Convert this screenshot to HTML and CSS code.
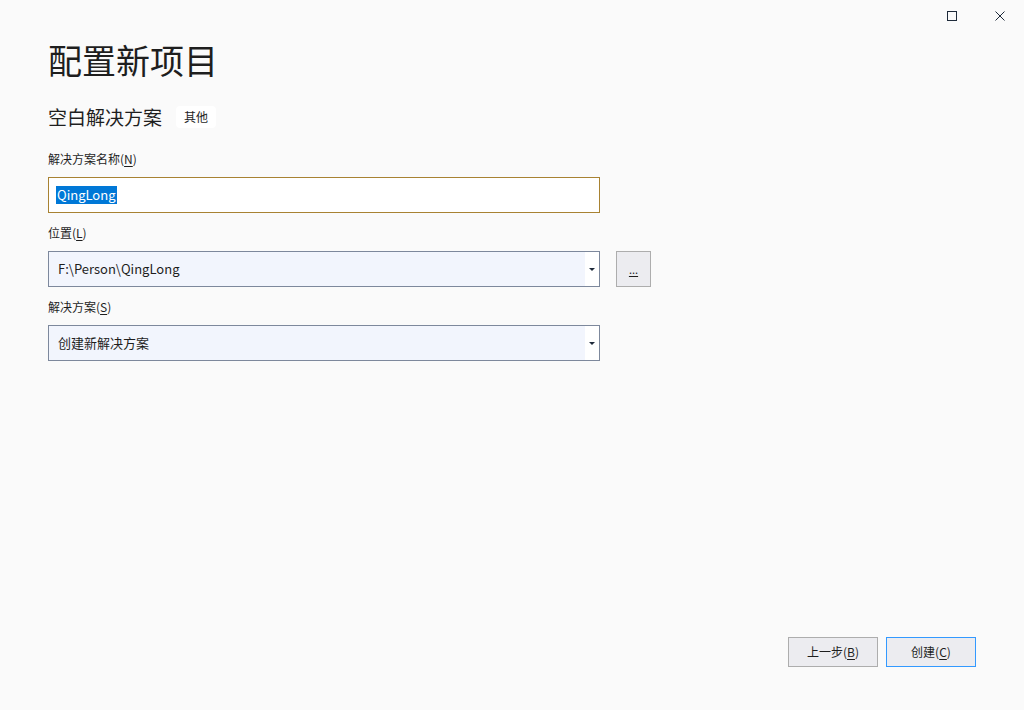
FILE: index.html
```html
<!DOCTYPE html>
<html lang="zh-CN">
<head>
  <meta charset="UTF-8">
  <title>配置新项目</title>
  <link rel="stylesheet" href="styles.css">
</head>
<body>
  <div class="window">
    <div class="titlebar">
      <button class="win-btn" aria-label="最大化">
        <svg width="10" height="10" viewBox="0 0 10 10"><rect x="0.5" y="0.5" width="9" height="9" fill="none" stroke="#1e2a3a" stroke-width="1"/></svg>
      </button>
      <button class="win-btn" aria-label="关闭">
        <svg width="10" height="10" viewBox="0 0 10 10"><path d="M0.5 0.5 L9.5 9.5 M9.5 0.5 L0.5 9.5" stroke="#1e2a3a" stroke-width="1"/></svg>
      </button>
    </div>

    <main class="content">
      <h1 class="page-title">配置新项目</h1>

      <div class="template-row">
        <span class="template-name">空白解决方案</span>
        <span class="tag">其他</span>
      </div>

      <label class="field-label first">解决方案名称(<u>N</u>)</label>
      <div class="textbox focused">
        <span class="selected">QingLong</span>
      </div>

      <label class="field-label">位置(<u>L</u>)</label>
      <div class="field-row">
        <div class="combo">
          <span class="combo-text">F:\Person\QingLong</span>
          <span class="combo-arrow"></span>
        </div>
        <button class="browse-btn"><u>...</u></button>
      </div>

      <label class="field-label">解决方案(<u>S</u>)</label>
      <div class="combo">
        <span class="combo-text">创建新解决方案</span>
        <span class="combo-arrow"></span>
      </div>
    </main>

    <footer class="actions">
      <button class="btn">上一步(<u>B</u>)</button>
      <button class="btn primary">创建(<u>C</u>)</button>
    </footer>
  </div>
</body>
</html>
```

FILE: styles.css
```css
* { margin: 0; padding: 0; box-sizing: border-box; }

:root {
  --bg: #fafafa;
  --text: #1e1e1e;
  --field-bg: #f2f5fd;
  --field-border: #7d889c;
  --focus-border: #a88232;
  --btn-bg: #ececf0;
  --btn-border: #adadad;
  --accent: #3399ff;
}

body {
  background-color: var(--bg);
  color: var(--text);
  font-family: "Noto Sans CJK SC", "Noto Sans", sans-serif;
  font-size: 12px;
}

.window {
  height: 100vh;
  display: flex;
  flex-direction: column;
}

.titlebar {
  height: 32px;
  display: flex;
  justify-content: flex-end;
}

.win-btn {
  width: 48px;
  height: 32px;
  background: none;
  border: none;
  display: flex;
  align-items: center;
  justify-content: center;
}

.content {
  flex: 1;
  padding: 0 48px;
}

.page-title {
  font-size: 34px;
  font-weight: normal;
  line-height: 46px;
  margin-top: 5px;
}

.template-row {
  display: flex;
  align-items: center;
  gap: 14px;
  margin-top: 21px;
}

.template-name {
  font-size: 19px;
  line-height: 26px;
}

.tag {
  background-color: #fff;
  border-radius: 4px;
  padding: 0 8px;
  line-height: 22px;
  font-size: 12px;
}

.field-label {
  display: block;
  line-height: 18px;
  margin-top: 11px;
  margin-bottom: 9px;
}

.field-label.first { margin-top: 20px; }

.textbox,
.combo {
  width: 552px;
  height: 36px;
  display: flex;
  align-items: center;
  font-size: 13px;
}

.textbox {
  background-color: #fff;
  border: 1px solid var(--focus-border);
  padding-left: 7px;
}

.selected {
  background-color: #0078d7;
  color: #fff;
  padding: 0 1px;
  line-height: 18px;
}

.field-row {
  display: flex;
  align-items: center;
  gap: 16px;
}

.combo {
  background-color: var(--field-bg);
  border: 1px solid var(--field-border);
}

.combo-text {
  flex: 1;
  padding-left: 9px;
  padding-bottom: 1px;
}

.combo-arrow {
  width: 14px;
  height: 100%;
  background-color: #fff;
  position: relative;
}

.combo-arrow::after {
  content: "";
  position: absolute;
  left: 4px;
  top: 16px;
  border-left: 3px solid transparent;
  border-right: 3px solid transparent;
  border-top: 3px solid #1e2a3a;
}

.browse-btn {
  width: 35px;
  height: 36px;
  background-color: var(--btn-bg);
  border: 1px solid var(--btn-border);
  font-family: inherit;
  font-size: 11px;
  color: var(--text);
}

.actions {
  display: flex;
  justify-content: flex-end;
  gap: 8px;
  padding: 0 48px 43px 0;
}

.btn {
  width: 90px;
  height: 30px;
  padding-bottom: 2px;
  background-color: var(--btn-bg);
  border: 1px solid var(--btn-border);
  font-family: inherit;
  font-size: 12px;
  color: var(--text);
}

.btn.primary {
  border-color: var(--accent);
}

u { text-decoration: underline; text-underline-offset: 2px; }
```
